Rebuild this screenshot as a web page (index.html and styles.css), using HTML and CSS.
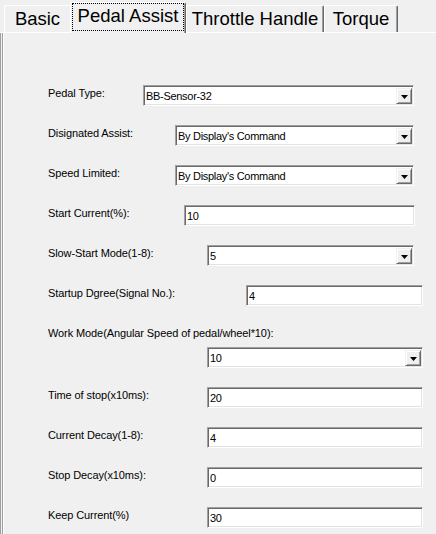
FILE: index.html
```html
<!DOCTYPE html>
<html>
<head>
<meta charset="utf-8">
<link rel="stylesheet" href="styles.css">
</head>
<body>
<div class="window">
  <div class="tabs">
    <div class="tab tab-basic">Basic</div>
    <div class="tab tab-pedal active"><span class="focus">Pedal Assist</span></div>
    <div class="tab tab-throttle">Throttle Handle</div>
    <div class="tab tab-torque">Torque</div>
  </div>
  <div class="panel">
    <div class="row">
      <span class="label">Pedal Type:</span>
      <div class="field combo w-type"><span class="value">BB-Sensor-32</span><span class="drop"><svg width="7" height="4" viewBox="0 0 7 4"><polygon points="0,0 7,0 3.5,4" fill="#000"/></svg></span></div>
    </div>
    <div class="row">
      <span class="label">Disignated Assist:</span>
      <div class="field combo w-assist"><span class="value">By Display's Command</span><span class="drop"><svg width="7" height="4" viewBox="0 0 7 4"><polygon points="0,0 7,0 3.5,4" fill="#000"/></svg></span></div>
    </div>
    <div class="row">
      <span class="label">Speed Limited:</span>
      <div class="field combo w-assist"><span class="value">By Display's Command</span><span class="drop"><svg width="7" height="4" viewBox="0 0 7 4"><polygon points="0,0 7,0 3.5,4" fill="#000"/></svg></span></div>
    </div>
    <div class="row">
      <span class="label">Start Current(%):</span>
      <div class="field w-start"><span class="value">10</span></div>
    </div>
    <div class="row">
      <span class="label">Slow-Start Mode(1-8):</span>
      <div class="field combo w-slow"><span class="value">5</span><span class="drop"><svg width="7" height="4" viewBox="0 0 7 4"><polygon points="0,0 7,0 3.5,4" fill="#000"/></svg></span></div>
    </div>
    <div class="row">
      <span class="label">Startup Dgree(Signal No.):</span>
      <div class="field w-startup"><span class="value">4</span></div>
    </div>
    <div class="row stacked">
      <span class="label">Work Mode(Angular Speed of pedal/wheel*10):</span>
      <div class="field combo w-wide"><span class="value">10</span><span class="drop"><svg width="7" height="4" viewBox="0 0 7 4"><polygon points="0,0 7,0 3.5,4" fill="#000"/></svg></span></div>
    </div>
    <div class="row">
      <span class="label">Time of stop(x10ms):</span>
      <div class="field w-wide"><span class="value">20</span></div>
    </div>
    <div class="row">
      <span class="label">Current Decay(1-8):</span>
      <div class="field w-wide"><span class="value">4</span></div>
    </div>
    <div class="row">
      <span class="label">Stop Decay(x10ms):</span>
      <div class="field w-wide"><span class="value">0</span></div>
    </div>
    <div class="row">
      <span class="label">Keep Current(%)</span>
      <div class="field w-wide"><span class="value">30</span></div>
    </div>
  </div>
</div>
</body>
</html>
```

FILE: styles.css
```css
* { box-sizing: border-box; }
html, body {
  margin: 0;
  padding: 0;
  background: #f0f0f0;
}
body {
  width: 436px;
  height: 534px;
  overflow: hidden;
  font-family: "Liberation Sans", Arial, sans-serif;
  color: #000;
}
.window {
  width: 436px;
  height: 534px;
  display: flex;
  flex-direction: column;
}
.tabs {
  display: flex;
  align-items: flex-end;
  height: 32px;
  padding-left: 4px;
  flex: none;
}
.tab {
  height: 27px;
  padding-top: 3px;
  font-size: 18.5px;
  line-height: 20px;
  text-align: center;
  white-space: nowrap;
  background: #f0f0f0;
  border-top: 1px solid #ffffff;
  border-left: 1px solid #ffffff;
  border-right: 1px solid #696969;
  box-shadow: inset -1px 0 #a0a0a0;
  border-top-left-radius: 2px;
  border-top-right-radius: 2px;
}
.tab-basic { width: 66px; border-right: none; box-shadow: none; }
.tab-pedal { width: 116px; }
.tab-throttle { width: 138px; }
.tab-torque { width: 74px; }
.tab.active {
  position: relative;
  z-index: 1;
  height: 31px;
  margin-bottom: -1px;
  padding: 0 1px 2px 1px;
}
.focus {
  display: block;
  height: 28px;
  padding-top: 2px;
  border: 1px dotted #000;
}
.panel {
  flex: 1;
  border-top: 1px solid #ffffff;
  box-shadow: inset 1px 0 #a0a0a0, inset 2px 0 #f0f0f0, inset 3px 0 #a0a0a0, inset 4px 0 #ffffff;
  padding-top: 52px;
  display: flex;
  flex-direction: column;
  gap: 19px;
}
.row {
  display: flex;
  align-items: flex-start;
  padding-left: 48px;
}
.row.stacked {
  flex-direction: column;
}
.row.stacked .field {
  margin-top: 6px;
}
.label {
  font-size: 11px;
  line-height: 16px;
  letter-spacing: -0.1px;
  white-space: nowrap;
}
.field {
  margin-left: auto;
  margin-right: 13px;
  height: 21px;
  background: #ffffff;
  border-top: 1px solid #a0a0a0;
  border-left: 1px solid #a0a0a0;
  border-bottom: 1px solid #ffffff;
  border-right: 1px solid #ffffff;
  box-shadow: inset 1px 1px #696969, inset -1px -1px #e3e3e3;
  display: flex;
  align-items: center;
  padding-left: 2px;
}
.value {
  flex: 1;
  font-size: 11px;
  line-height: 14px;
  letter-spacing: -0.3px;
  white-space: nowrap;
}
.combo { padding-right: 1px; }
.drop {
  width: 16px;
  height: 16px;
  margin-top: 1px;
  background: #f0f0f0;
  border-top: 1px solid #f0f0f0;
  border-left: 1px solid #f0f0f0;
  border-bottom: 1px solid #696969;
  border-right: 1px solid #696969;
  box-shadow: inset 1px 1px #ffffff, inset -1px -1px #a0a0a0;
  display: flex;
  align-items: center;
  justify-content: center;
}
.drop svg { display: block; margin-top: 1px; }
.w-type { width: 271px; margin-right: 22px; }
.w-assist { width: 239px; margin-right: 22px; }
.w-start { width: 231px; margin-right: 21px; }
.w-slow { width: 207px; margin-right: 22px; }
.w-startup { width: 177px; }
.w-wide { width: 216px; }
.row.stacked .w-wide { margin-left: 159px; }
```
